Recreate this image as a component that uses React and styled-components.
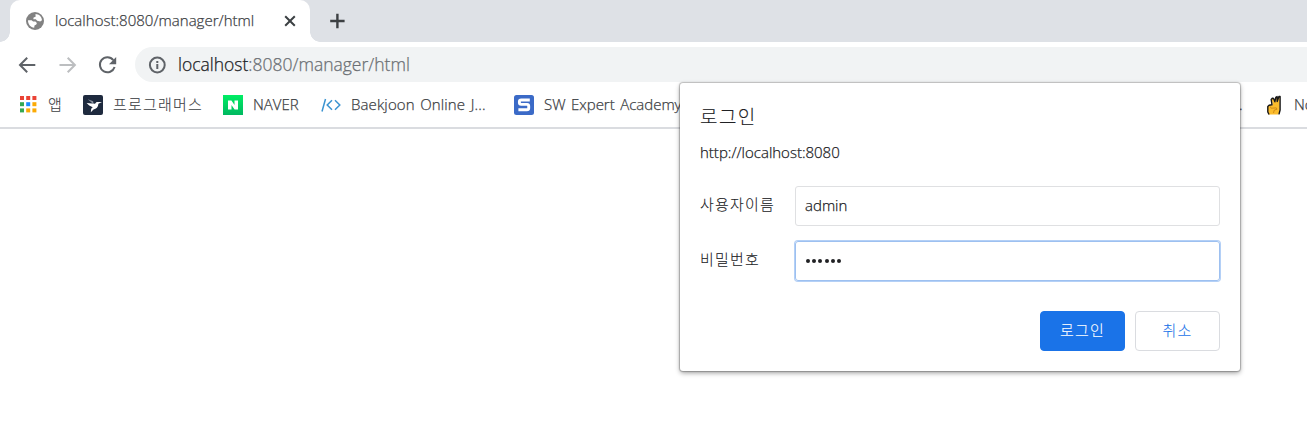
import React from "react";
import styled, { createGlobalStyle } from "styled-components";

const GlobalStyle = createGlobalStyle`
  * { box-sizing: border-box; }
  html, body { margin: 0; height: 100%; overflow: hidden; background: #fff; }
  body { font-family: "Open Sans", "Noto Sans CJK KR", sans-serif; }
`;

const Browser = styled.div`
  position: relative;
  width: 1307px;
  height: 435px;
  overflow: hidden;
  background: #fff;
`;

const TabStrip = styled.div`
  display: flex;
  height: 42px;
  padding-left: 10px;
  background: #dee1e6;
`;

const Tab = styled.div`
  position: relative;
  display: flex;
  align-items: center;
  width: 300px;
  height: 42px;
  padding: 0 14px 0 16px;
  border-radius: 10px 10px 0 0;
  background: #fff;

  &::before, &::after {
    content: "";
    position: absolute;
    bottom: 0;
    width: 10px;
    height: 10px;
  }
  &::before {
    left: -10px;
    background: radial-gradient(circle at 0 0, #dee1e6 9.5px, #fff 10px);
  }
  &::after {
    right: -10px;
    background: radial-gradient(circle at 100% 0, #dee1e6 9.5px, #fff 10px);
  }
`;

const Text = styled.span`
  display: block;
  flex: none;
  margin-top: -1px;
  white-space: pre;
  font-size: ${(p) => p.$size || 15}px;
  line-height: 20px;
  font-weight: 300;
  letter-spacing: ${(p) => p.$track ?? 0}px;
  word-spacing: 1.5px;
  color: ${(p) => p.$color || "#3c4043"};
  -webkit-text-stroke: 0.25px currentColor;
`;

const Hangul = styled(Text)`
  letter-spacing: ${(p) => p.$track ?? 1.2}px;
  -webkit-text-stroke-width: 0.1px;
`;

const TabTitle = styled(Text)`
  flex: 1;
  margin-top: -2px;
  margin-left: 11px;
`;

const NewTab = styled.div`
  display: flex;
  align-items: center;
  margin-left: 19px;
`;

const Toolbar = styled.div`
  display: flex;
  align-items: center;
  height: 45px;
  padding-left: 17px;
  background: #fff;
`;

const NavButton = styled.span`
  display: flex;
  flex: none;
  width: 40px;
  color: ${(p) => (p.$disabled ? "#bcbec0" : "#5f6368")};
`;

const Omnibox = styled.div`
  display: flex;
  flex: none;
  align-items: center;
  width: 1200px;
  height: 35px;
  margin-left: -2px;
  padding-left: 13px;
  border-radius: 18px;
  background: #f1f3f4;
`;

const Url = styled(Text)`
  margin-left: 12px;
  b { font-weight: inherit; color: #202124; -webkit-text-stroke-color: #202124; }
`;

const Bookmarks = styled.div`
  position: relative;
  display: flex;
  height: 42px;
  padding: 8px 0 0 19px;
  border-bottom: 2px solid #dadce0;
`;

const Bookmark = styled.div`
  display: flex;
  flex: none;
  align-items: flex-start;
  gap: ${(p) => p.$gap ?? 10}px;
  width: ${(p) => p.$width}px;
  svg { flex: none; }
`;

const Dialog = styled.form`
  position: absolute;
  left: 680px;
  top: 83px;
  width: 560px;
  height: 288px;
  padding: 23px 20px 20px;
  border-radius: 3px;
  background: #fff;
  box-shadow: 0 0 1px 1px rgba(0, 0, 0, 0.22), 0 2px 5px rgba(0, 0, 0, 0.38);
`;

const Title = styled(Hangul)`
  line-height: 24px;
`;

const Origin = styled(Text)`
  margin-top: 13px;
`;

const Field = styled.label`
  display: flex;
  align-items: center;
  height: 40px;
  margin-top: ${(p) => p.$top}px;
`;

const Label = styled(Hangul)`
  width: 95px;
  margin-top: -4px;
`;

const Value = styled(Text)`
  margin-top: -2px;
`;

const Input = styled.div`
  display: flex;
  flex: 1;
  align-items: center;
  height: 40px;
  padding-left: 9px;
  border: 1px solid ${(p) => (p.$focused ? "#9dc0f0" : "#dfe0e2")};
  border-radius: 3px;
  box-shadow: ${(p) => (p.$focused ? "0 0 0 1px #b4d0f6" : "none")};
`;

const Dots = styled.span`
  display: flex;
  gap: 2.2px;
  margin-left: 1px;
  i { width: 4px; height: 4px; border-radius: 2px; background: #202124; }
`;

const Actions = styled.div`
  display: flex;
  justify-content: flex-end;
  gap: 10px;
  margin-top: 30px;
`;

const Button = styled.div`
  display: flex;
  align-items: center;
  justify-content: center;
  width: 85px;
  height: 40px;
  padding-bottom: 2px;
  border: 1px solid ${(p) => (p.$primary ? "#1a73e8" : "#dadce0")};
  border-radius: 4px;
  background: ${(p) => (p.$primary ? "#1a73e8" : "#fff")};
`;

const Globe = () => (
  <svg width="18" height="18" viewBox="0 0 18 18">
    <circle cx="9" cy="9" r="9" fill="#828282" />
    <path d="M12.6 3.100 9.800 2.600 8.200 4.500l.4 1.400L7 6.800l-1 .5v1.300h3.600l2.300 1.500v1.800l-2 .4-.8 1.300v2.300C5.200 15.800 2.300 13 2 9.500l3.300.300 1.800 2.300 1.500-.4-1.500-1.200H5.500L2.200 8.200" fill="none" />
    <path d="M2 8.300h3.600l1.500 1.300h2.300l1.500 1.300-.6 1.700-1.800.8-.3 2.400C4.700 15.500 1.900 12.300 2 8.300Z" fill="#fff" />
    <path d="M9.500 2.100c3.500.1 6.300 2.800 6.500 6.200l-1.800 1.200-3-.7L9.800 7.200H7.300l.3-1.600 2-.8Z" fill="#fff" />
  </svg>
);

const Close = () => (
  <svg width="12" height="12" viewBox="0 0 12 12" stroke="#3c4043" strokeWidth="2" fill="none">
    <path d="m1.2 1.2 9.6 9.6m0-9.6-9.6 9.6" />
  </svg>
);

const Plus = () => (
  <svg width="16" height="16" viewBox="0 0 16 16" stroke="#3c4043" strokeWidth="2.4" fill="none">
    <path d="M8.4 .8v14.4M1.2 8h14.4" />
  </svg>
);

const Arrow = ({ flip }) => (
  <svg width="20" height="20" viewBox="0 0 20 20" stroke="currentColor" strokeWidth="2" fill="none">
    <path d={flip ? "M2.5 10H18m-7.3-7.2 7.2 7.2-7.2 7.2" : "M18.3 10H3m7.2-7.2L3 10l7.2 7.2"} />
  </svg>
);

const Reload = () => (
  <svg width="20" height="20" viewBox="0 0 20 20" fill="none">
    <path d="M16.3 5.1A7.5 7.5 0 1 0 17.6 12" stroke="currentColor" strokeWidth="2" />
    <path d="M19.2 2v7.2H12Z" fill="currentColor" />
  </svg>
);

const Info = () => (
  <svg width="18" height="18" viewBox="0 0 18 18" fill="none" stroke="#5f6368" strokeWidth="2">
    <circle cx="9.3" cy="9" r="7.4" />
    <path d="M9.3 8v5M9.3 5v2" />
  </svg>
);

const APP_COLORS = ["#ea4335", "#ea4335", "#ea4335", "#34a853", "#1a8cff", "#fbaa05", "#34a853", "#fbaa05", "#fbaa05"];
const Apps = () => (
  <svg width="20" height="20" viewBox="0 0 20 20">
    {APP_COLORS.map((c, i) => (
      <rect key={i} x={1 + (i % 3) * 6.2} y={1 + Math.floor(i / 3) * 6.2} width="4" height="4" fill={c} />
    ))}
  </svg>
);

const Bird = () => (
  <svg width="20" height="20" viewBox="0 0 20 20">
    <rect width="20" height="20" rx="2" fill="#1e2a3e" />
    <path d="m4.8 4.2 5.4 2.1.3 3Z" fill="#8b93a0" />
    <path d="m3.6 8 8.4.8 1.6-1.7L19 7l-3.6 1.800c-.2 3.4-2 5.3-4.9 5.6l-2.700 2.900.4-3.600 1.500-1.500-3.500-1.700Z" fill="#fff" />
  </svg>
);

const Naver = () => (
  <svg width="20" height="20" viewBox="0 0 20 20">
    <defs>
      <linearGradient id="naver" x1="0" y1="0" x2="0" y2="1">
        <stop offset="0" stopColor="#00ee64" />
        <stop offset="1" stopColor="#00b860" />
      </linearGradient>
    </defs>
    <rect width="20" height="20" fill="url(#naver)" />
    <path d="M5 5.5h3.4l3.1 4.4V5.5H15v9h-3.4l-3.1-4.4v4.4H5Z" fill="#fff" />
  </svg>
);

const Code = () => (
  <svg width="20" height="20" viewBox="0 0 20 20" fill="none" stroke="#3b94d1" strokeWidth="1.5">
    <path d="M4.5 4 1 16.5M11 5.3 6.2 10l4.8 4.7M14 5.3l4.8 4.7-4.8 4.7" />
  </svg>
);

const Expert = () => (
  <svg width="20" height="20" viewBox="0 0 20 20">
    <rect width="20" height="20" rx="2.5" fill="#3b6ac7" />
    <path d="M15.8 5H7.2Q5.4 5 5.4 6.6v1.2q0 1.6 1.8 1.6h5.9q1.6 0 1.6 1.6v2.2q0 1.6-1.8 1.6H4.4" fill="none" stroke="#fff" strokeWidth="2.9" />
  </svg>
);

const Hand = () => (
  <svg width="20" height="20" viewBox="0 0 20 20" strokeLinecap="round" strokeLinejoin="round">
    <path d="M3.6 19.5 2.8 17v-5.5l1.4-1.3 3.5-.2-.8-5.5 1.3-1 2.3 3.5 1-4.5 2 .2 1.3-.9V15l-1.500 4.500Z" fill="#fbbc2d" />
    <path d="M3.8 19 2.8 17v-5.5l1.3-1.3 2.9-.4L6.2 4.5 7.3 3.2l1.3.3 1.3 3.300.9-4.500 1.300-.8.1 5 1.700-5h1.200V15l-1 3.800" fill="none" stroke="#171717" strokeWidth="1.4" />
    <path d="m5.5 12 .4 1.2 5.5-.3.5 1.5-2.6.6-.7 2.6" fill="none" stroke="#d38d16" />
  </svg>
);

export default function App() {
  return (
    <Browser>
      <GlobalStyle />
      <TabStrip>
        <Tab>
          <Globe />
          <TabTitle $track={0.02}>localhost:8080/manager/html</TabTitle>
          <Close />
        </Tab>
        <NewTab><Plus /></NewTab>
      </TabStrip>
      <Toolbar>
        <NavButton><Arrow /></NavButton>
        <NavButton $disabled><Arrow flip /></NavButton>
        <NavButton><Reload /></NavButton>
        <Omnibox>
          <Info />
          <Url $size={17.5} $color="#6b6f73">
            <b>localhost</b>:8080/manager/html
          </Url>
        </Omnibox>
      </Toolbar>
      <Bookmarks>
        <Bookmark $width={64} $gap={9}><Apps /><Hangul>앱</Hangul></Bookmark>
        <Bookmark $width={140}><Bird /><Hangul>프로그래머스</Hangul></Bookmark>
        <Bookmark $width={98}><Naver /><Text>NAVER</Text></Bookmark>
        <Bookmark $width={193}><Code /><Text $track={0.13}>Baekjoon Online J...</Text></Bookmark>
        <Bookmark $width={725}><Expert /><Text>SW Expert Academy</Text></Bookmark>
        <Bookmark $width={26}><Text>.</Text></Bookmark>
        <Bookmark $width={80} $gap={9}><Hand /><Text>Notion</Text></Bookmark>
      </Bookmarks>
      <Dialog>
        <Title $size={19} $color="#202124" $track={1.4}>로그인</Title>
        <Origin $color="#202124">http://localhost:8080</Origin>
        <Field $top={24}>
          <Label $color="#202124">사용자이름</Label>
          <Input><Value $color="#202124">admin</Value></Input>
        </Field>
        <Field $top={15}>
          <Label $color="#202124">비밀번호</Label>
          <Input $focused><Dots><i /><i /><i /><i /><i /><i /></Dots></Input>
        </Field>
        <Actions>
          <Button $primary><Hangul $color="#fff">로그인</Hangul></Button>
          <Button><Hangul $color="#1a73e8">취소</Hangul></Button>
        </Actions>
      </Dialog>
    </Browser>
  );
}
